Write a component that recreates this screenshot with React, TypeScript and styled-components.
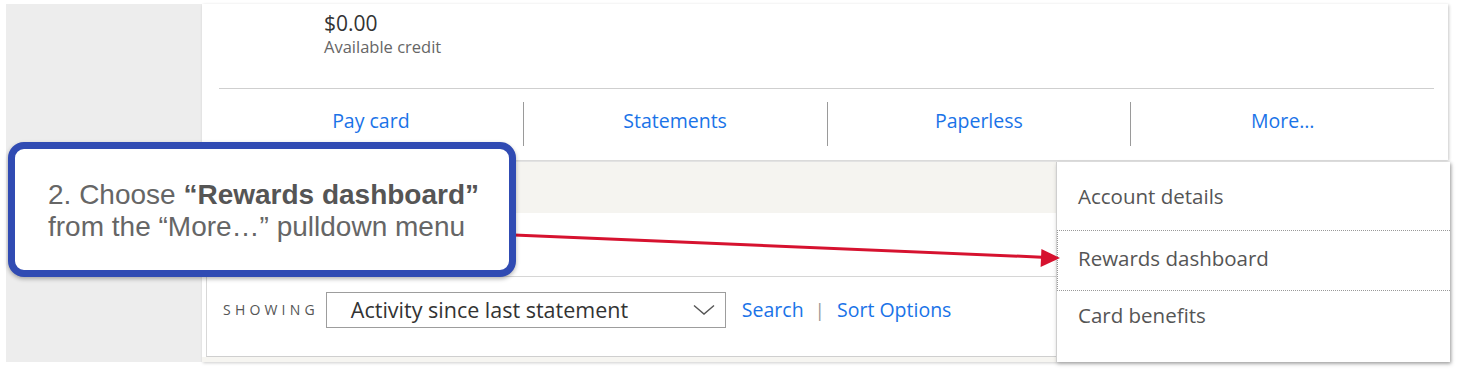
import React from 'react';
import styled, {createGlobalStyle} from 'styled-components';

const GlobalStyle = createGlobalStyle`
  html, body {
    margin: 0;
    background: #fff;
  }
  body {
    font-family: 'Open Sans', 'Noto Sans', sans-serif;
  }
  * {
    box-sizing: border-box;
  }
`;

const actions = ['Pay card', 'Statements', 'Paperless', 'More…'];

const menu = [
  {label: 'Account details', height: 68, shift: 0},
  {label: 'Rewards dashboard', height: 61, shift: 6, active: true},
  {label: 'Card benefits', height: 48, shift: 0},
];

const App: React.FC = () => {
  return (
    <Page>
      <GlobalStyle />
      <Sidebar />
      <Main>
        <TopCard>
          <Balance>
            <Amount>$0.00</Amount>
            <Caption>Available credit</Caption>
          </Balance>
          <ActionBar>
            {actions.map((a) => (
              <Action key={a}>{a}</Action>
            ))}
          </ActionBar>
        </TopCard>
        <BottomRow>
          <Panel>
            <PanelInner>
              <Band />
              <Spacer />
              <FilterRow>
                <ShowingLabel>Showing</ShowingLabel>
                <Select>
                  <span>Activity since last statement</span>
                  <svg width="22" height="12" viewBox="0 0 22 12">
                    <polyline
                      points="1,1.5 11,10 21,1.5"
                      fill="none"
                      stroke="#555"
                      strokeWidth="1.4"
                    />
                  </svg>
                </Select>
                <TextLink>Search</TextLink>
                <Pipe>|</Pipe>
                <TextLink>Sort Options</TextLink>
              </FilterRow>
            </PanelInner>
            <BottomStrip />
          </Panel>
          <Dropdown>
            {menu.map((m) => (
              <MenuItem
                key={m.label}
                $height={m.height}
                $shift={m.shift}
                $active={m.active}
              >
                {m.label}
              </MenuItem>
            ))}
          </Dropdown>
        </BottomRow>
      </Main>

      <ArrowLayer width="1458" height="374" viewBox="0 0 1458 374">
        <line x1="514" y1="235" x2="1042" y2="257.2" stroke="#d6122f" strokeWidth="3" />
        <polygon points="1060,258 1041.4,249 1040.6,267" fill="#d6122f" />
      </ArrowLayer>

      <Callout>
        <CalloutLine>
          2. Choose <strong>“Rewards dashboard”</strong>
        </CalloutLine>
        <CalloutLine>from the “More…” pulldown menu</CalloutLine>
      </Callout>
    </Page>
  );
};
export default App;

const Page = styled.div`
  position: relative;
  display: flex;
  width: 1458px;
  height: 374px;
  padding: 4px 8px 12px 6px;
`;

const Sidebar = styled.div`
  width: 196px;
  background: #ededed;
`;

const Main = styled.div`
  flex: 1;
  display: flex;
  flex-direction: column;
  gap: 2px;
`;

const TopCard = styled.div`
  height: 156px;
  margin-right: 2px;
  padding: 0 14px 0 17px;
  background: #fff;
  box-shadow: 1px 1px 3px rgba(0, 0, 0, 0.22);
  display: flex;
  flex-direction: column;
`;

const Balance = styled.div`
  padding: 6px 0 0 105px;
  height: 84px;
`;

const Amount = styled.div`
  font-size: 21px;
  line-height: 26px;
  color: #333;
`;

const Caption = styled.div`
  font-size: 16.5px;
  line-height: 22px;
  color: #666;
`;

const ActionBar = styled.div`
  border-top: 1px solid #cfcfcf;
  padding: 13px 0;
  display: grid;
  grid-template-columns: repeat(4, 1fr);
`;

const Action = styled.div`
  height: 44px;
  padding-bottom: 7px;
  display: flex;
  align-items: center;
  justify-content: center;
  font-size: 19.5px;
  color: #1a73e8;

  & + & {
    border-left: 1px solid #9a9a9a;
  }
`;

const BottomRow = styled.div`
  position: relative;
  flex: 1;
`;

const Panel = styled.div`
  height: 100%;
  padding-left: 4px;
  background: #fff;
  box-shadow: 1px 1px 3px rgba(0, 0, 0, 0.2);
  display: flex;
  flex-direction: column;
`;

const PanelInner = styled.div`
  flex: 1;
  border-left: 1px solid #d8d8d8;
  border-bottom: 1px solid #cfcfcf;
  display: flex;
  flex-direction: column;
`;

const Band = styled.div`
  height: 51px;
  background: #f5f4f0;
`;

const Spacer = styled.div`
  height: 64px;
  border-bottom: 1px solid #d6d6d6;
`;

const FilterRow = styled.div`
  flex: 1;
  display: flex;
  align-items: center;
  padding: 0 0 14px 16px;
`;

const ShowingLabel = styled.span`
  font-size: 14px;
  letter-spacing: 4.2px;
  text-transform: uppercase;
  color: #555;
  margin-right: 7px;
`;

const Select = styled.div`
  width: 400px;
  height: 36px;
  border: 1px solid #9d9d9d;
  padding: 0 10px 0 24px;
  display: flex;
  align-items: center;
  justify-content: space-between;
  font-size: 21.5px;
  color: #333;
  margin-right: 16px;
`;

const TextLink = styled.span`
  font-size: 19.5px;
  color: #1a73e8;
`;

const Pipe = styled.span`
  font-size: 19px;
  color: #999;
  margin: 0 12px 0 11px;
`;

const BottomStrip = styled.div`
  height: 5px;
  margin-left: -4px;
  background: #f6f5f1;
`;

const Dropdown = styled.div`
  position: absolute;
  top: 0;
  right: 0;
  width: 394px;
  height: 200px;
  background: #fff;
  border-left: 1px solid #cfcfcf;
  box-shadow: 1px 2px 4px rgba(0, 0, 0, 0.25);
`;

const MenuItem = styled.div<{$height: number; $shift: number; $active?: boolean}>`
  height: ${(p) => p.$height}px;
  padding-bottom: ${(p) => p.$shift}px;
  display: flex;
  align-items: center;
  padding-left: 21px;
  font-size: 20.5px;
  color: #555;
  ${(p) =>
    p.$active &&
    `
    border: 1px dotted #999;
    border-right: none;
    padding-left: 20px;
  `}
`;

const ArrowLayer = styled.svg`
  position: absolute;
  top: 0;
  left: 0;
  pointer-events: none;
`;

const Callout = styled.div`
  position: absolute;
  left: 8px;
  top: 142px;
  width: 508px;
  height: 135px;
  border: 7px solid #304bb3;
  border-radius: 16px;
  background: #fff;
  box-shadow: 0 2px 4px rgba(0, 0, 0, 0.3);
  padding: 2px 0 0 33px;
  display: flex;
  flex-direction: column;
  justify-content: center;
  font-family: 'Liberation Sans', Arial, sans-serif;
  font-size: 28px;
  line-height: 32px;
  color: #666;

  strong {
    color: #555;
  }
`;

const CalloutLine = styled.div``;
